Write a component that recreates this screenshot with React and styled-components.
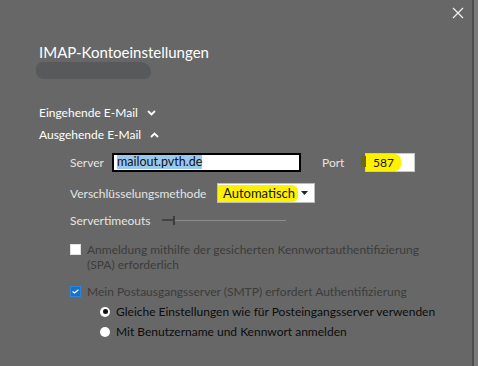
import styled, { createGlobalStyle } from "styled-components"

const Global = createGlobalStyle`
    html, body {
        margin: 0;
        padding: 0;
        background: #7a7a7a;
    }
    body {
        font-family: Lato, "Noto Sans", "DejaVu Sans", sans-serif;
    }
`

const Page = styled.div`
    width: 474px;
    height: 366px;
    box-sizing: border-box;
    background: #676767;
    border-right: 2px solid #4e4e4e;
    display: flex;
    flex-direction: column;
    padding-left: 39px;
    overflow: hidden;
`

const TopBar = styled.div`
    height: 42px;
    display: flex;
    justify-content: flex-end;
    align-items: flex-start;
    padding-right: 8px;
    padding-top: 7px;
    box-sizing: border-box;
`

const Close = styled.div`
    width: 12px;
    height: 12px;
    display: flex;
`

const Title = styled.h1`
    margin: 0;
    font-size: 15px;
    font-weight: 400;
    color: #ffffff;
    line-height: 20px;
`

const Smudge = styled.div`
    width: 115px;
    height: 17px;
    margin: 0 0 0 -3px;
    background: #58595b;
    border-radius: 9px 14px 9px 10px;
`

const SectionHead = styled.div`
    display: flex;
    align-items: center;
    gap: 9px;
    font-size: 12px;
    color: #ffffff;
    height: 21px;
    margin-top: ${p => p.$top || 0}px;
`

const Sub = styled.div`
    display: flex;
    flex-direction: column;
    padding-left: 31px;
`

const Row = styled.div`
    display: flex;
    align-items: center;
    height: ${p => p.$h || 20}px;
    margin-top: ${p => p.$top || 0}px;
`

const Label = styled.span`
    font-size: 12px;
    color: #e4e4e4;
    width: ${p => p.$w ? `${p.$w}px` : "auto"};
    flex-shrink: 0;
`

const TextBox = styled.div`
    width: 189px;
    height: 19px;
    box-sizing: border-box;
    border: 2px solid #000;
    background: #fff;
    display: flex;
    align-items: center;
    padding-left: 3px;
    font-size: 12.5px;
    color: #111;
`

const Selected = styled.span`
    background: #99c9ef;
    line-height: 14px;
`

const PortBox = styled.div`
    position: relative;
    width: 50px;
    height: 19px;
    box-sizing: border-box;
    border: 1px solid #c8c8c8;
    background: #fff;
    display: flex;
    align-items: center;
    margin-left: 11px;
    font-size: 12px;
    color: #111;
`

const Marker = styled.span`
    background: #fff200;
    display: flex;
    align-items: center;
    height: ${p => p.$h || 16}px;
    padding: 0 ${p => p.$pr || 6}px 0 ${p => p.$pl || 6}px;
    border-radius: 0 6px 6px 0;
`

const Olive = styled.span`
    position: absolute;
    left: -5px;
    top: 2px;
    width: 5px;
    height: 11px;
    background: #6b6b12;
`

const Select = styled.div`
    width: 98px;
    height: 20px;
    box-sizing: border-box;
    border: 1px solid #bdbdbd;
    background: #fff;
    display: flex;
    align-items: center;
    justify-content: space-between;
    font-size: 13px;
    color: #111;
    padding-right: 6px;
`

const Slider = styled.div`
    width: 124px;
    height: 9px;
    display: flex;
    align-items: center;
`

const Track = styled.div`
    flex: 1;
    height: 1px;
    background: #8c8c8c;
`

const TrackFill = styled.div`
    width: 11px;
    height: 2px;
    background: #444;
`

const Thumb = styled.div`
    width: 2px;
    height: 9px;
    background: #3d3d3d;
`

const CheckRow = styled.div`
    display: flex;
    align-items: flex-start;
    gap: 6px;
    margin-top: ${p => p.$top || 0}px;
`

const Box = styled.div`
    width: 11px;
    height: 11px;
    flex-shrink: 0;
    margin-top: 2px;
    box-sizing: border-box;
    background: ${p => p.$checked ? "#1c6fc4" : "#fff"};
    border: 1px solid ${p => p.$checked ? "#2b86dc" : "#e0e0e0"};
    display: flex;
    align-items: center;
    justify-content: center;
`

const CheckText = styled.span`
    font-size: 12px;
    line-height: 15px;
    color: #3c3c3c;
    width: 340px;
`

const Radios = styled.div`
    display: flex;
    flex-direction: column;
    padding-left: 30px;
    margin-top: 5px;
    gap: 5px;
`

const RadioRow = styled.div`
    display: flex;
    align-items: center;
    gap: 6px;
    height: 15px;
`

const Radio = styled.div`
    width: 10px;
    height: 10px;
    border-radius: 50%;
    background: #fff;
    display: flex;
    align-items: center;
    justify-content: center;
    &::after {
        content: "";
        width: 5px;
        height: 5px;
        border-radius: 50%;
        background: ${p => p.$on ? "#111" : "transparent"};
    }
`

const RadioText = styled.span`
    font-size: 12px;
    color: #0c0c0c;
`

const Chevron = ({ up }) => (
    <svg width="9" height="6" viewBox="0 0 9 6">
        <path d={up ? "M1 5 L4.5 1.5 L8 5" : "M1 1 L4.5 4.5 L8 1"} stroke="#fff" strokeWidth="1.8" fill="none" />
    </svg>
)

const App = () => {
    return (
        <>
            <Global />
            <Page>
                <TopBar>
                    <Close>
                        <svg width="12" height="12" viewBox="0 0 12 12">
                            <path d="M1 1 L11 11 M11 1 L1 11" stroke="#f2f2f2" strokeWidth="1.2" />
                        </svg>
                    </Close>
                </TopBar>
                <Title>IMAP-Kontoeinstellungen</Title>
                <Smudge />
                <SectionHead $top={23}>Eingehende E-Mail <Chevron /></SectionHead>
                <SectionHead $top={1}>Ausgehende E-Mail <Chevron up /></SectionHead>
                <Sub>
                    <Row $top={7} $h={20}>
                        <Label $w={42}>Server</Label>
                        <TextBox><Selected>mailout.pvth.de</Selected></TextBox>
                        <Label $w={32} style={{ marginLeft: 21 }}>Port</Label>
                        <PortBox>
                            <Olive />
                            <Marker $h={17} $pl={7} $pr={7}>587</Marker>
                        </PortBox>
                    </Row>
                    <Row $top={11} $h={20}>
                        <Label $w={147}>Verschlüsselungsmethode</Label>
                        <Select>
                            <Marker $h={17} $pl={5} $pr={3}>Automatisch</Marker>
                            <svg width="7" height="4" viewBox="0 0 7 4"><path d="M0 0 H7 L3.5 4 Z" fill="#222" /></svg>
                        </Select>
                    </Row>
                    <Row $top={8} $h={18}>
                        <Label $w={92}>Servertimeouts</Label>
                        <Slider>
                            <TrackFill />
                            <Thumb />
                            <Track />
                        </Slider>
                    </Row>
                    <CheckRow $top={13}>
                        <Box />
                        <CheckText>Anmeldung mithilfe der gesicherten Kennwortauthentifizierung (SPA) erforderlich</CheckText>
                    </CheckRow>
                    <CheckRow $top={12}>
                        <Box $checked>
                            <svg width="7" height="5" viewBox="0 0 7 5"><path d="M0.5 2.5 L2.5 4 L6.5 0.8" stroke="#fff" strokeWidth="1.2" fill="none" /></svg>
                        </Box>
                        <CheckText>Mein Postausgangsserver (SMTP) erfordert Authentifizierung</CheckText>
                    </CheckRow>
                    <Radios>
                        <RadioRow>
                            <Radio $on />
                            <RadioText>Gleiche Einstellungen wie für Posteingangsserver verwenden</RadioText>
                        </RadioRow>
                        <RadioRow>
                            <Radio />
                            <RadioText>Mit Benutzername und Kennwort anmelden</RadioText>
                        </RadioRow>
                    </Radios>
                </Sub>
            </Page>
        </>
    )
}

export default App
